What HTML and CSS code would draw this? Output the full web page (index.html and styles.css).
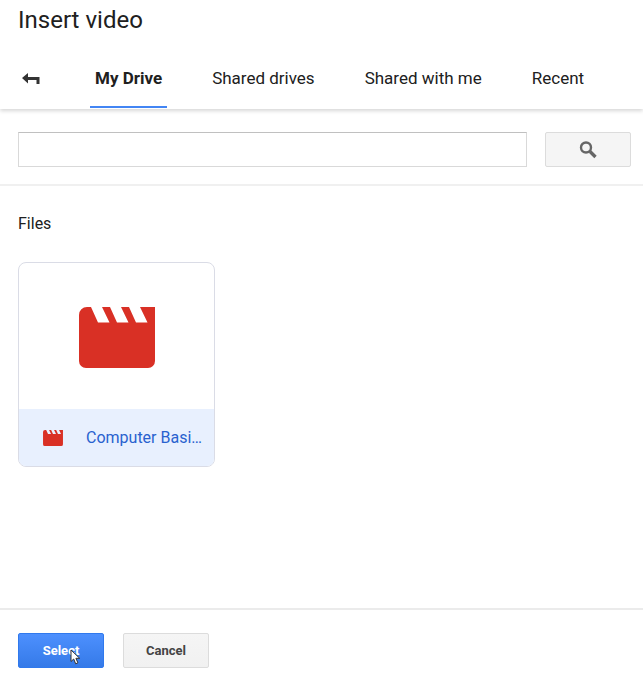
FILE: index.html
```html
<!DOCTYPE html>
<html lang="en">
<head>
    <meta charset="UTF-8">
    <meta name="viewport" content="width=device-width, initial-scale=1.0">
    <title>Insert video</title>

    <link rel="stylesheet" href="styles.css">
</head>
<body>
    <svg class="symbols" aria-hidden="true">
        <symbol id="movie" viewBox="0 0 76 61">
            <path fill="#d93025" d="M8 0H12L19 15.500H30.500L23 0H31L38 15.500H49.500L42 0H50L57 15.500H68.500L61 0H76V54a7 7 0 0 1-7 7H7a7 7 0 0 1-7-7V8a8 8 0 0 1 8-8z"/>
        </symbol>
    </svg>

    <div class="picker">
        <header class="header">
            <h1>Insert video</h1>
            <nav class="tabs">
                <button class="back" type="button" aria-label="Back">
                    <svg width="18" height="12" viewBox="0 0 18 12">
                        <path fill="#333" d="M0 6L6 1V5H17.500V12H14.500V8H6V11.500z"/>
                    </svg>
                </button>
                <a class="tab active" href="#">My Drive</a>
                <a class="tab" href="#">Shared drives</a>
                <a class="tab" href="#">Shared with me</a>
                <a class="tab" href="#">Recent</a>
            </nav>
        </header>

        <form class="search">
            <input type="text" aria-label="Search files">
            <button type="button" aria-label="Search">
                <svg width="18" height="18" viewBox="0 0 18 18" fill="none" stroke="#666">
                    <circle cx="7" cy="6.500" r="5" stroke-width="2.400"/>
                    <path d="M11 10.500L16.500 16" stroke-width="3.400"/>
                </svg>
            </button>
        </form>

        <main class="files">
            <h2>Files</h2>
            <a class="card" href="#">
                <div class="preview">
                    <svg width="76" height="61"><use href="#movie"/></svg>
                </div>
                <div class="caption">
                    <svg width="20" height="16"><use href="#movie"/></svg>
                    <span>Computer Basi…</span>
                </div>
            </a>
        </main>

        <footer class="actions">
            <button class="btn primary" type="button">Select
                <svg class="cursor" width="11" height="16" viewBox="0 0 11 16">
                    <path fill="#fff" stroke="#333" d="M1 1V12.500L3.700 10L5.700 14.800L7.900 13.800L5.900 9.300H9.700z"/>
                </svg>
            </button>
            <button class="btn" type="button">Cancel</button>
        </footer>
    </div>
</body>
</html>
```
FILE: styles.css
```css
* {
    box-sizing: border-box;
}

body {
    margin: 0;
    background: #fff;
    color: #202020;
    font-family: Roboto, Arial, sans-serif;
    font-size: 16px;
    line-height: 20px;
}

button, input {
    font: inherit;
}

.symbols {
    display: none;
}

.picker {
    display: flex;
    flex-direction: column;
    min-height: 100vh;
}

.header {
    padding-top: 4px;
    box-shadow: 0 2px 4px rgba(0, 0, 0, 0.16);
}

h1 {
    margin: 0;
    padding: 0 18px;
    font-size: 24px;
    font-weight: 400;
    line-height: 32px;
}

.tabs {
    display: flex;
    gap: 40px;
    height: 73px;
    padding: 12px 18px 1px;
}

.back {
    display: flex;
    align-items: center;
    width: 32px;
    padding: 0 4px;
    border: 0;
    background: none;
}

.tab {
    padding: 20px 5px;
    border-bottom: 2px solid transparent;
    color: inherit;
    font-size: 17px;
    text-decoration: none;
    white-space: nowrap;
}

.tab.active {
    border-color: #4285f4;
    font-weight: 700;
}

.search {
    display: flex;
    align-items: center;
    gap: 18px;
    padding: 23px 12px 17px 18px;
    border-bottom: 2px solid #f0f0f0;
}

.search input {
    flex: 1;
    min-width: 0;
    height: 35px;
    padding: 0 8px;
    border: 1px solid #d9d9d9;
    border-top-color: #c0c0c0;
}

.search button {
    display: flex;
    align-items: center;
    justify-content: center;
    width: 86px;
    height: 35px;
    border: 1px solid #dcdcdc;
    border-radius: 2px;
    background: #f5f5f5;
}

.files {
    flex: 1;
    padding: 28px 18px;
}

h2 {
    margin: 0 0 28px;
    font-size: 16px;
    font-weight: 400;
}

.card {
    display: block;
    width: 197px;
    border: 1px solid #dadce6;
    border-radius: 8px;
    overflow: hidden;
    text-decoration: none;
}

.preview {
    display: flex;
    align-items: center;
    justify-content: center;
    height: 146px;
    padding-top: 2px;
}

.caption {
    display: flex;
    align-items: center;
    gap: 23px;
    height: 57px;
    padding: 0 8px 0 24px;
    background: #e8f0fe;
    color: #2962cf;
}

.caption svg {
    flex: none;
}

.caption span {
    overflow: hidden;
    text-overflow: ellipsis;
    white-space: nowrap;
}

.actions {
    display: flex;
    gap: 19px;
    padding: 23px 18px 5px;
    border-top: 2px solid #ebebeb;
}

.btn {
    position: relative;
    width: 86px;
    height: 35px;
    padding: 0;
    border: 1px solid #dcdcdc;
    border-radius: 2px;
    background: linear-gradient(#f5f5f5, #f1f1f1);
    color: #444;
    font-size: 13px;
    font-weight: 700;
}

.btn.primary {
    border-color: #3079ed;
    background: linear-gradient(#4d90fe, #357ae8);
    color: #fff;
}

/* mouse pointer resting on the button */
.cursor {
    position: absolute;
    top: 15px;
    left: 51px;
}
```
